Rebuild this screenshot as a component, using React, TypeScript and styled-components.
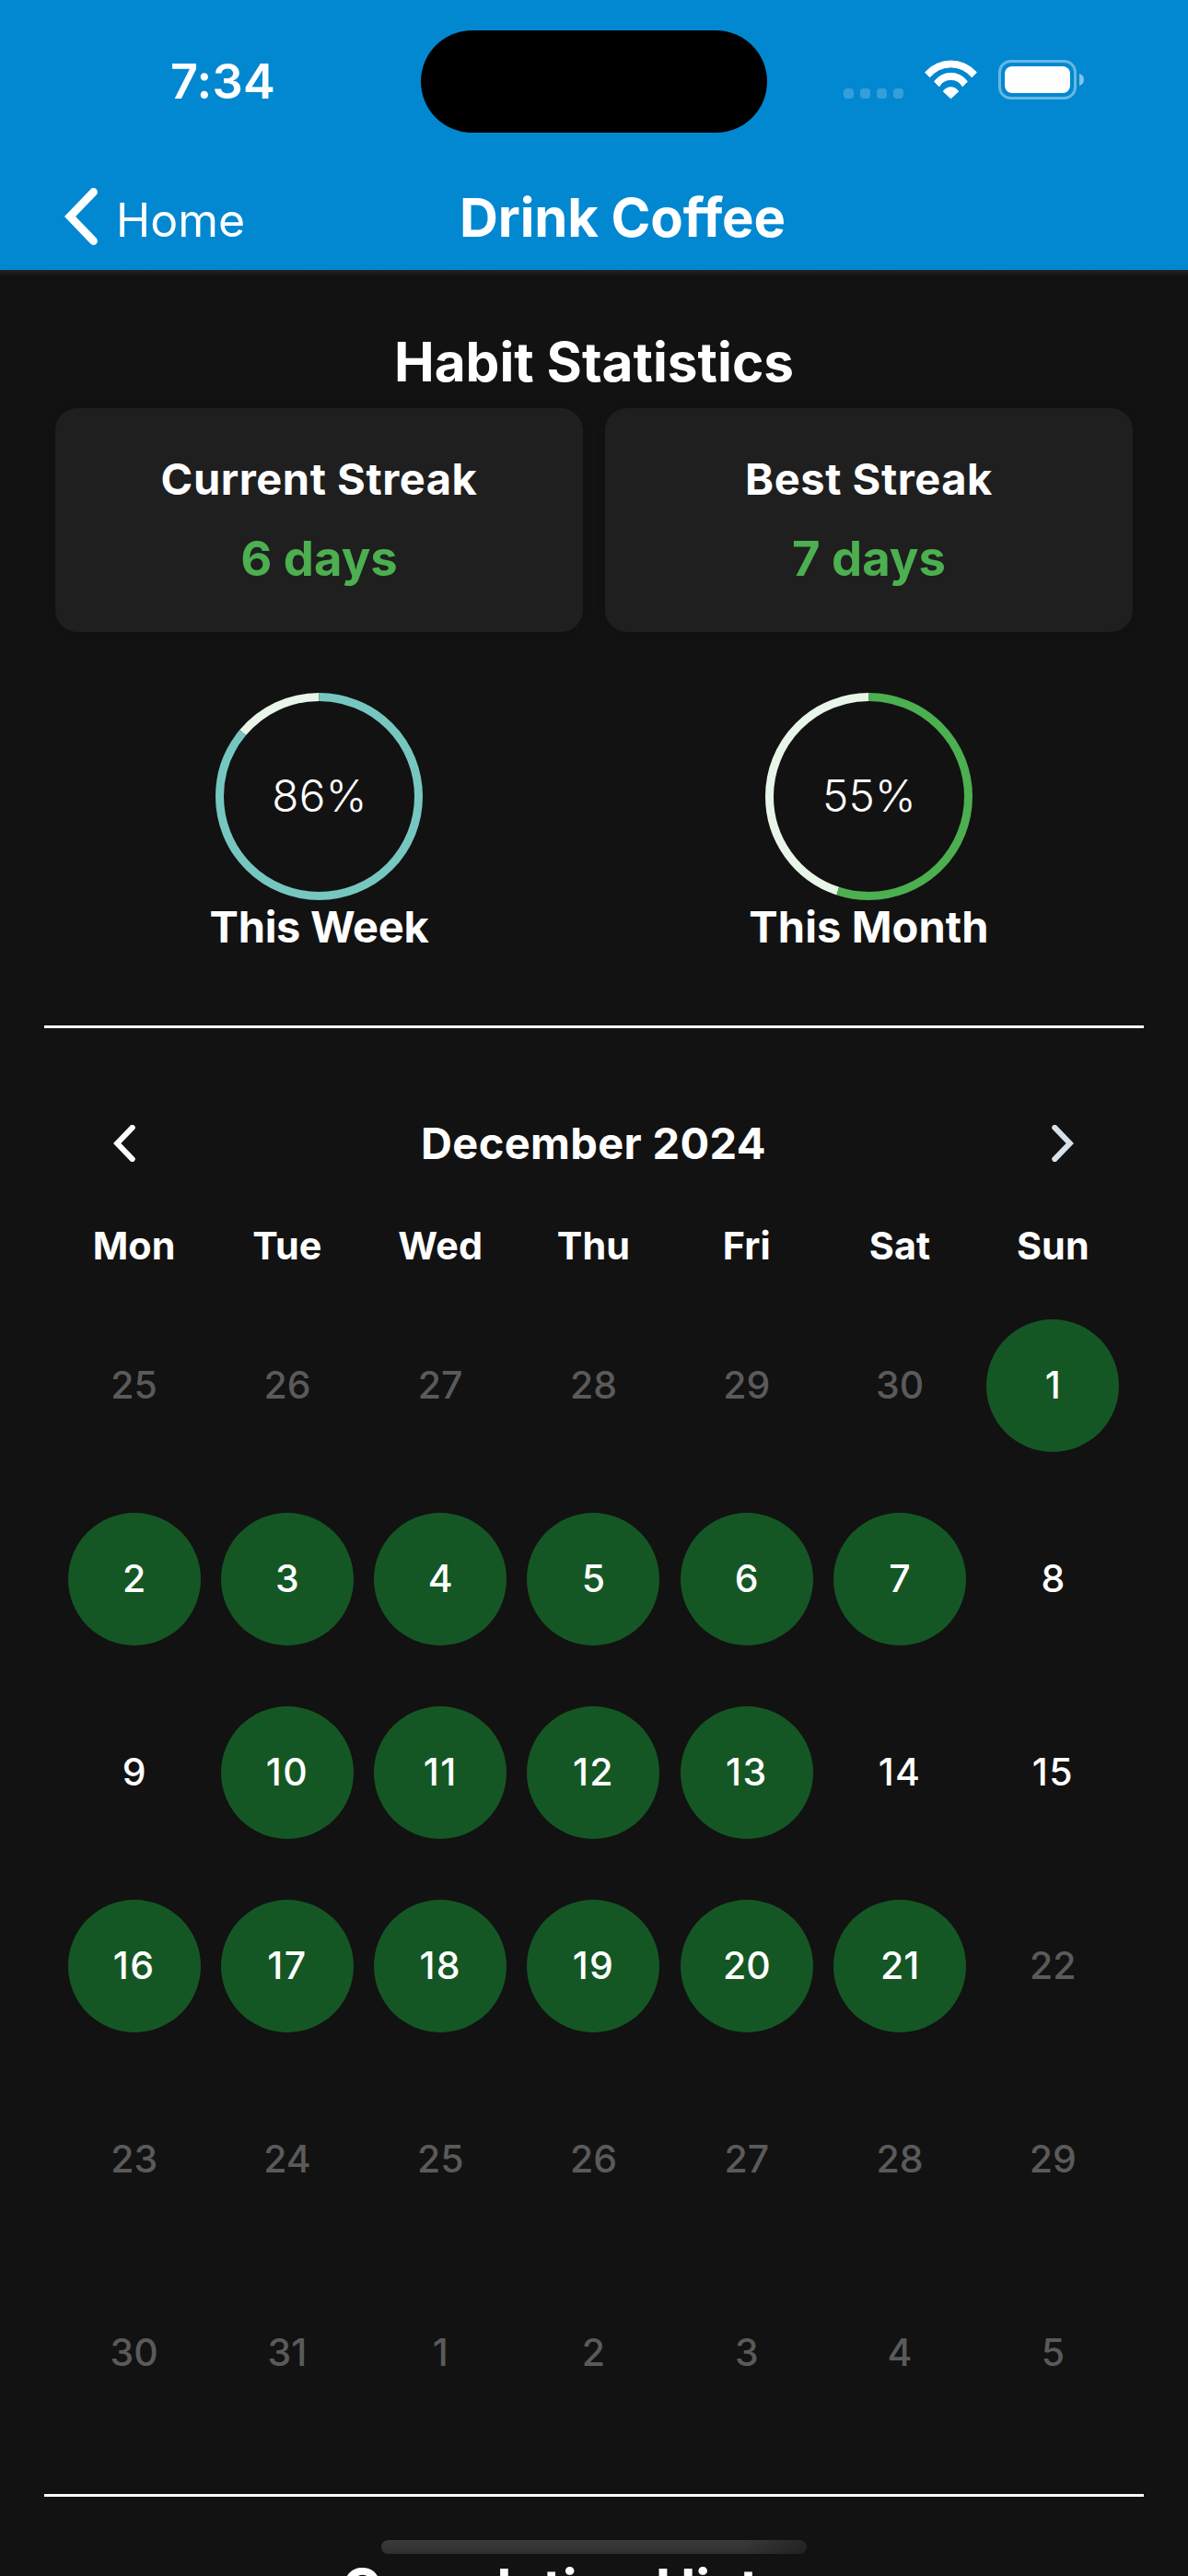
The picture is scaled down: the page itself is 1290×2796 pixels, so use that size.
import React from "react";
import styled, { createGlobalStyle } from "styled-components";

const GlobalStyle = createGlobalStyle`
  html, body { margin: 0; padding: 0; background: #121212; }
  *, *::before, *::after { box-sizing: border-box; }
`;

const Screen = styled.div`
  position: relative;
  width: 1290px;
  height: 2796px;
  overflow: hidden;
  background: #121212;
  color: #fff;
  font-family: Inter, "Liberation Sans", sans-serif;
`;

const Header = styled.header`
  height: 293px;
  background: #0288d1;
`;

const StatusBar = styled.div`
  display: grid;
  grid-template-columns: 457px 376px 1fr;
  align-items: center;
  height: 177px;
`;

const Clock = styled.div`
  padding: 0 0 2px 185px;
  font-size: 52.3px;
  font-weight: 600;
  letter-spacing: 0.2px;
  line-height: 64px;
`;

const Island = styled.div`
  height: 111px;
  border-radius: 56px;
  background: #000;
`;

const StatusIcons = styled.div`
  display: flex;
  align-items: center;
  gap: 23px;
  padding: 0 0 4px 83px;

  svg { display: block; }
`;

const SignalDots = styled.div`
  display: flex;
  gap: 7px;
  padding-top: 30px;
`;

const Dot = styled.span`
  width: 11px;
  height: 11px;
  border-radius: 4px;
  background: rgba(255, 255, 255, 0.2);
`;

const NavBar = styled.nav`
  display: flex;
  align-items: center;
  height: 116px;
  padding-left: 70px;
`;

const BackLink = styled.a`
  display: flex;
  align-items: center;
  gap: 20px;
  width: 429px;
  font-size: 50px;
  font-weight: 370;
  line-height: 60px;

  svg { display: block; }
  span { padding-top: 7px; }
`;

const NavTitle = styled.h1`
  margin: 0;
  padding-top: 1px;
  font-size: 58px;
  font-weight: 680;
  letter-spacing: -0.1px;
  line-height: 72px;
`;

const Content = styled.main`
  padding-top: 50px;
  background: linear-gradient(#242424, #121212 7px);
`;

const SectionTitle = styled.h2`
  margin: 0;
  font-size: 58.5px;
  font-weight: 680;
  letter-spacing: 0;
  line-height: 100px;
  text-align: center;
`;

const TwoColumns = styled.section`
  display: grid;
  grid-template-columns: 1fr 1fr;
  gap: 24px;
  padding: 0 60px;
`;

const Card = styled.div`
  height: 243px;
  padding-top: 34px;
  border-radius: 24px;
  background: #1f1f1f;
  box-shadow: 0 0 12px rgba(0, 0, 0, 0.1);
  text-align: center;
  line-height: 86px;
`;

const CardLabel = styled.div`
  font-size: 47px;
  font-weight: 680;
  letter-spacing: 0.55px;
`;

const CardValue = styled.div`
  color: #4caf50;
  font-size: 52.6px;
  font-weight: 680;
  letter-spacing: 0;
`;

const ProgressColumn = styled.div`
  display: flex;
  flex-direction: column;
  align-items: center;
  padding-top: 66px;
`;

const RingBox = styled.div`
  display: grid;
  place-items: center;
  width: 225px;
  height: 225px;

  & > * { grid-area: 1 / 1; }
`;

const Percent = styled.span`
  padding: 0 0 2px 1px;
  font-size: 47.7px;
  font-weight: 300;
  letter-spacing: 0.3px;
  line-height: 60px;
`;

const ProgressLabel = styled.div<{ $spacing: number }>`
  font-size: 47px;
  font-weight: 680;
  letter-spacing: ${(p) => p.$spacing}px;
  line-height: 58px;
`;

const Divider = styled.hr<{ $top: number }>`
  height: 3px;
  margin: ${(p) => p.$top}px 48px 0;
  border: 0;
  background: #fff;
`;

const Calendar = styled.section`
  padding: 85px 63.5px 0 62.5px;
`;

const MonthBar = styled.div`
  display: flex;
  align-items: center;
  justify-content: space-between;
  height: 80px;
  padding: 0 60px;

  svg { display: block; }
`;

const MonthTitle = styled.h3`
  margin: 0;
  padding-bottom: 2px;
  font-size: 47px;
  font-weight: 660;
  letter-spacing: 0.35px;
`;

const Weekdays = styled.div`
  display: grid;
  grid-template-columns: repeat(7, 1fr);
  margin-top: 41px;
  font-size: 41.3px;
  font-weight: 660;
  letter-spacing: 0.1px;
  line-height: 60px;
  text-align: center;
`;

const Days = styled.div`
  display: grid;
  grid-template-columns: repeat(7, 1fr);
  grid-auto-rows: 210px;
  place-items: center;
  margin-top: 17px;
`;

const Day = styled.div<{ $done: boolean; $muted: boolean; $spacing: number }>`
  display: grid;
  place-items: center;
  width: 144px;
  height: 144px;
  padding-bottom: 2px;
  border-radius: 50%;
  background: ${(p) => (p.$done ? "#155724" : "transparent")};
  color: ${(p) => (p.$muted ? "#5a5a5a" : "#fff")};
  font-size: 41px;
  font-weight: 500;
  letter-spacing: ${(p) => p.$spacing}px;
`;

const HistoryTitle = styled(SectionTitle)`
  margin-top: 50px;
  letter-spacing: -0.25px;
`;

const HomeIndicator = styled.div`
  position: absolute;
  left: 414px;
  top: 2757px;
  width: 462px;
  height: 15px;
  border-radius: 8px;
  background:
    linear-gradient(90deg, rgba(18, 18, 18, 0) 85%, rgba(18, 18, 18, 0.5)),
    linear-gradient(#3a3a3a, #303030);
`;

function Chevron({ flip = false, color = "#fff", width = 24, height = 40, stroke = 9.4 }: { flip?: boolean; color?: string; width?: number; height?: number; stroke?: number }) {
  return (
    <svg width={width} height={height} viewBox="0 0 36 62" fill="none" stroke={color} strokeWidth={stroke} strokeLinecap="round">
      <path d={flip ? "M4.5 4.5 30 31 4.5 57.5" : "M31.5 4.5 6 31 31.5 57.5"} />
    </svg>
  );
}

function Wifi() {
  return (
    <svg width="57" height="43" viewBox="0 0 57 43" fill="#fff" stroke="#fff" strokeWidth="1" strokeLinejoin="round">
      <path d="M.6 13.6A37.2 37.2 0 0 1 56.4 13.6L51.3 18.8A29.2 29.2 0 0 0 5.7 18.8Z" />
      <path d="M10.6 23.4A22.2 22.2 0 0 1 46.4 23.4L41.2 28.9A14.5 14.5 0 0 0 15.8 28.9Z" />
      <path d="M20.3 34.2A9.8 9.8 0 0 1 36.7 34.2L28.5 41.8Z" />
    </svg>
  );
}

function Battery() {
  return (
    <svg width="93" height="43" viewBox="0 0 93 43" fill="#fff">
      <rect x="1.5" y="1.5" width="82" height="40" rx="12" fill="none" stroke="#fff" strokeOpacity=".4" strokeWidth="3" />
      <rect x="7" y="7" width="71" height="29" rx="8" />
      <path d="M88 15C91.5 16 93 18.6 93 21.5S91.5 27 88 28Z" fillOpacity=".5" />
    </svg>
  );
}

function Ring({ value, color }: { value: number; color: string }) {
  const r = 108;
  const length = 2 * Math.PI * r;
  return (
    <svg width="225" height="225" viewBox="0 0 225 225" fill="none" strokeWidth="9">
      <g transform="rotate(-90 112.5 112.5)">
        <circle cx="112.5" cy="112.5" r={r} stroke="#e8f5e9" strokeDasharray={`0 ${length * value} ${length * (1 - value)} 0`} />
        <circle cx="112.5" cy="112.5" r={r} stroke={color} strokeDasharray={`${length * value} ${length}`} />
      </g>
    </svg>
  );
}

const weekdays = ["Mon", "Tue", "Wed", "Thu", "Fri", "Sat", "Sun"];
const completed = new Set([1, 2, 3, 4, 5, 6, 7, 10, 11, 12, 13, 16, 17, 18, 19, 20, 21]);
const today = 21;

const days = Array.from({ length: 42 }, (_, i) => {
  const n = i - 5;
  const inMonth = n >= 1 && n <= 31;
  return {
    label: n < 1 ? n + 30 : n > 31 ? n - 31 : n,
    done: inMonth && completed.has(n),
    muted: !inMonth || n > today,
  };
});

export default function App() {
  return (
    <Screen>
      <GlobalStyle />
      <Header>
        <StatusBar>
          <Clock>7:34</Clock>
          <Island />
          <StatusIcons>
            <SignalDots>
              <Dot /><Dot /><Dot /><Dot />
            </SignalDots>
            <Wifi />
            <Battery />
          </StatusIcons>
        </StatusBar>
        <NavBar>
          <BackLink>
            <Chevron width={36} height={62} stroke={8.8} />
            <span>Home</span>
          </BackLink>
          <NavTitle>Drink Coffee</NavTitle>
        </NavBar>
      </Header>
      <Content>
        <SectionTitle>Habit Statistics</SectionTitle>
        <TwoColumns>
          <Card>
            <CardLabel>Current Streak</CardLabel>
            <CardValue>6 days</CardValue>
          </Card>
          <Card>
            <CardLabel>Best Streak</CardLabel>
            <CardValue>7 days</CardValue>
          </Card>
        </TwoColumns>
        <TwoColumns>
          <ProgressColumn>
            <RingBox>
              <Ring value={0.86} color="#76c7c0" />
              <Percent>86%</Percent>
            </RingBox>
            <ProgressLabel $spacing={-0.3}>This Week</ProgressLabel>
          </ProgressColumn>
          <ProgressColumn>
            <RingBox>
              <Ring value={0.55} color="#4caf50" />
              <Percent>55%</Percent>
            </RingBox>
            <ProgressLabel $spacing={0.1}>This Month</ProgressLabel>
          </ProgressColumn>
        </TwoColumns>
        <Divider $top={78} />
        <Calendar>
          <MonthBar>
            <Chevron />
            <MonthTitle>December 2024</MonthTitle>
            <Chevron flip color="#d9e1e8" />
          </MonthBar>
          <Weekdays>
            {weekdays.map((d) => <span key={d}>{d}</span>)}
          </Weekdays>
          <Days>
            {days.map((d, i) => (
              <Day key={i} $done={d.done} $muted={d.muted} $spacing={d.label >= 10 && d.label < 20 ? 1.4 : 0}>
                {d.label}
              </Day>
            ))}
          </Days>
        </Calendar>
        <Divider $top={48} />
        <HistoryTitle>Completion History</HistoryTitle>
      </Content>
      <HomeIndicator />
    </Screen>
  );
}
